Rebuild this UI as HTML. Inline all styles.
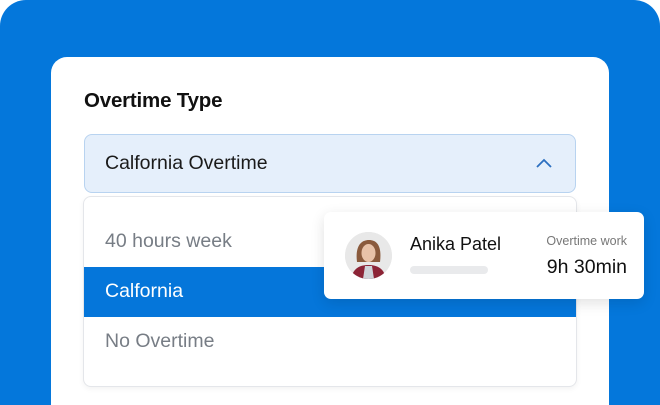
<!DOCTYPE html>
<html style="width:660px;height:405px;overflow:hidden"><head><style>
*{margin:0;padding:0;box-sizing:border-box}
body{width:660px;height:405px;overflow:hidden;background:#fff;font-family:"Liberation Sans",sans-serif;position:relative}
.bg{position:absolute;left:0;top:0;width:660px;height:405px;background:#0477DB;border-radius:26px 26px 0 0}
.card{position:absolute;left:51px;top:57px;width:558px;height:348px;background:#fff;border-radius:16px 16px 0 0}
.title{position:absolute;left:84px;top:89px;font-size:20.5px;font-weight:bold;color:#111;letter-spacing:-0.2px}
.sel{position:absolute;left:84px;top:134px;width:492px;height:59px;background:#E5EFFB;border:1px solid #B8D3F0;border-radius:8px}
.sel span{position:absolute;left:20px;top:17px;font-size:19.5px;color:#1a1a1a}
.dd{position:absolute;left:83px;top:196px;width:494px;height:191px;background:#fff;border:1px solid #e4e6ea;border-radius:8px;box-shadow:0 2px 6px rgba(0,0,0,.05);overflow:hidden}
.it{position:absolute;left:0;width:100%;height:50px;font-size:19.5px;color:#777d85;padding:13px 0 0 21px}
.blue{background:#0576DA;color:#fff}
.pop{position:absolute;left:324px;top:212px;width:320px;height:87px;background:#fff;border-radius:7px;box-shadow:0 4px 14px rgba(0,0,0,.12)}
.av{position:absolute;left:21px;top:20px;width:47px;height:47px;border-radius:50%;background:#e6e6e6;overflow:hidden}
</style></head><body>
<div class="bg"></div>
<div class="card"></div>
<div class="title">Overtime Type</div>
<div class="sel"><span>Calfornia Overtime</span>
<svg style="position:absolute;left:450px;top:22px" width="18" height="12" viewBox="0 0 18 12"><path d="M2 10L9 3L16 10" fill="none" stroke="#2c6fc0" stroke-width="1.8"/></svg></div>
<div class="dd">
<div class="it" style="top:20px">40 hours week</div>
<div class="it blue" style="top:70px">Calfornia</div>
<div class="it" style="top:120px">No Overtime</div>
</div>
<div class="pop">
<div class="av"><svg width="47" height="47" viewBox="0 0 47 47"><rect width="47" height="47" fill="#e8e8e8"/><path d="M12 30C10 14 16 8 24 8S37 14 35 30Z" fill="#8a5a3c"/><ellipse cx="23.5" cy="21" rx="7" ry="9" fill="#e8c2a8"/><path d="M6 47C8 36 15 33 23.5 33S39 36 41 47Z" fill="#8c2436"/><path d="M18 47L20 34H27L29 47Z" fill="#cfd3d8"/></svg></div>
<div style="position:absolute;left:86px;top:22px;font-size:18px;color:#111">Anika Patel</div>
<div style="position:absolute;left:86px;top:54px;width:78px;height:8px;border-radius:4px;background:#e9eaec"></div>
<div style="position:absolute;right:17px;top:22px;font-size:12.5px;color:#777">Overtime work</div>
<div style="position:absolute;right:17px;top:44px;font-size:19.5px;color:#111">9h 30min</div>
</div>
</body></html>
